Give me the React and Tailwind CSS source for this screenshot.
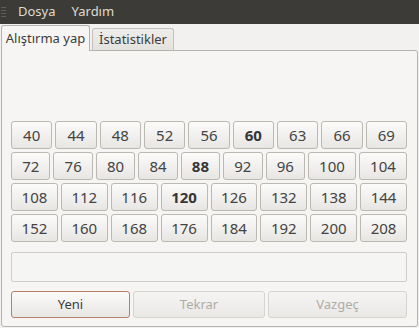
const rows = [
  ['40', '44', '48', '52', '56', '60', '63', '66', '69'],
  ['72', '76', '80', '84', '88', '92', '96', '100', '104'],
  ['108', '112', '116', '120', '126', '132', '138', '144'],
  ['152', '160', '168', '176', '184', '192', '200', '208'],
];

const bold = ['60', '88', '120'];

const font = { fontFamily: '"Noto Sans", "Open Sans", sans-serif' };

const NumButton = ({ label }) => (
  <button
    className={
      'flex-auto h-[28px] px-0 rounded-[3px] border border-[#bcb8b2] bg-gradient-to-b from-[#fbfbfa] to-[#e8e6e3] text-[15px] leading-none ' +
      (bold.includes(label) ? 'font-bold text-[#363636]' : 'text-[#444]')
    }
  >
    {label}
  </button>
);

export default function App() {
  return (
    <div className="w-[419px] h-[328px] bg-[#f2f1f0] flex flex-col overflow-hidden" style={font}>
      {/* menu */}
      <div className="h-[24px] bg-[#3c3b37] flex items-center text-[13px] text-[#dfdbd2]">
        <div className="w-[6px] ml-[1px] flex flex-col gap-[2px]">
          <div className="h-px w-[5px] bg-[#5e5c57]" />
          <div className="h-px w-[5px] bg-[#5e5c57]" />
          <div className="h-px w-[5px] bg-[#5e5c57]" />
          <div className="h-px w-[5px] bg-[#5e5c57]" />
        </div>
        <span className="ml-[11px]">Dosya</span>
        <span className="ml-[16px]">Yardım</span>
      </div>

      {/* tabs */}
      <div className="h-[26px] flex items-end pl-[1px] gap-[2px] text-[13px] text-[#3c3c3c]">
        <div className="relative z-10 -mb-px h-[26px] w-[89px] flex items-center justify-center rounded-t-[3px] border border-b-0 border-[#b5b3af] bg-[#f6f5f4]">
          Alıştırma yap
        </div>
        <div className="h-[22px] w-[82px] flex items-center justify-center rounded-t-[3px] border border-b-0 border-[#c4c1bc] bg-gradient-to-b from-[#efedeb] to-[#e4e2de]">
          İstatistikler
        </div>
      </div>

      {/* panel */}
      <div className="ml-[1px] w-[417px] h-[277px] border border-[#b5b3af] rounded-b-[3px] rounded-tr-[3px] bg-[#f6f5f4] pl-[9px] pr-[10px] pt-[70px] flex flex-col">
        <div className="flex flex-col gap-[3px]">
          {rows.map((r, i) => (
            <div key={i} className="flex gap-[3px]">
              {r.map((n) => (
                <NumButton key={n} label={n} />
              ))}
            </div>
          ))}
        </div>

        <div className="mt-[10px] h-[30px] border border-[#cfcdca] rounded-[2px] bg-[#f5f5f4]" />

        <div className="mt-[9px] flex gap-[3px] text-[13px]">
          <button className="w-[119px] h-[27px] rounded-[3px] border border-[#b5806c] bg-gradient-to-b from-[#fbfbfa] to-[#e8e6e3] text-[#3c3c3c]">
            Yeni
          </button>
          <button className="w-[132px] h-[27px] rounded-[3px] border border-[#d6d4d0] bg-gradient-to-b from-[#f5f4f3] to-[#ebe9e6] text-[#aeaca8]">
            Tekrar
          </button>
          <button className="flex-1 h-[27px] rounded-[3px] border border-[#d6d4d0] bg-gradient-to-b from-[#f5f4f3] to-[#ebe9e6] text-[#aeaca8]">
            Vazgeç
          </button>
        </div>
      </div>
    </div>
  );
}
